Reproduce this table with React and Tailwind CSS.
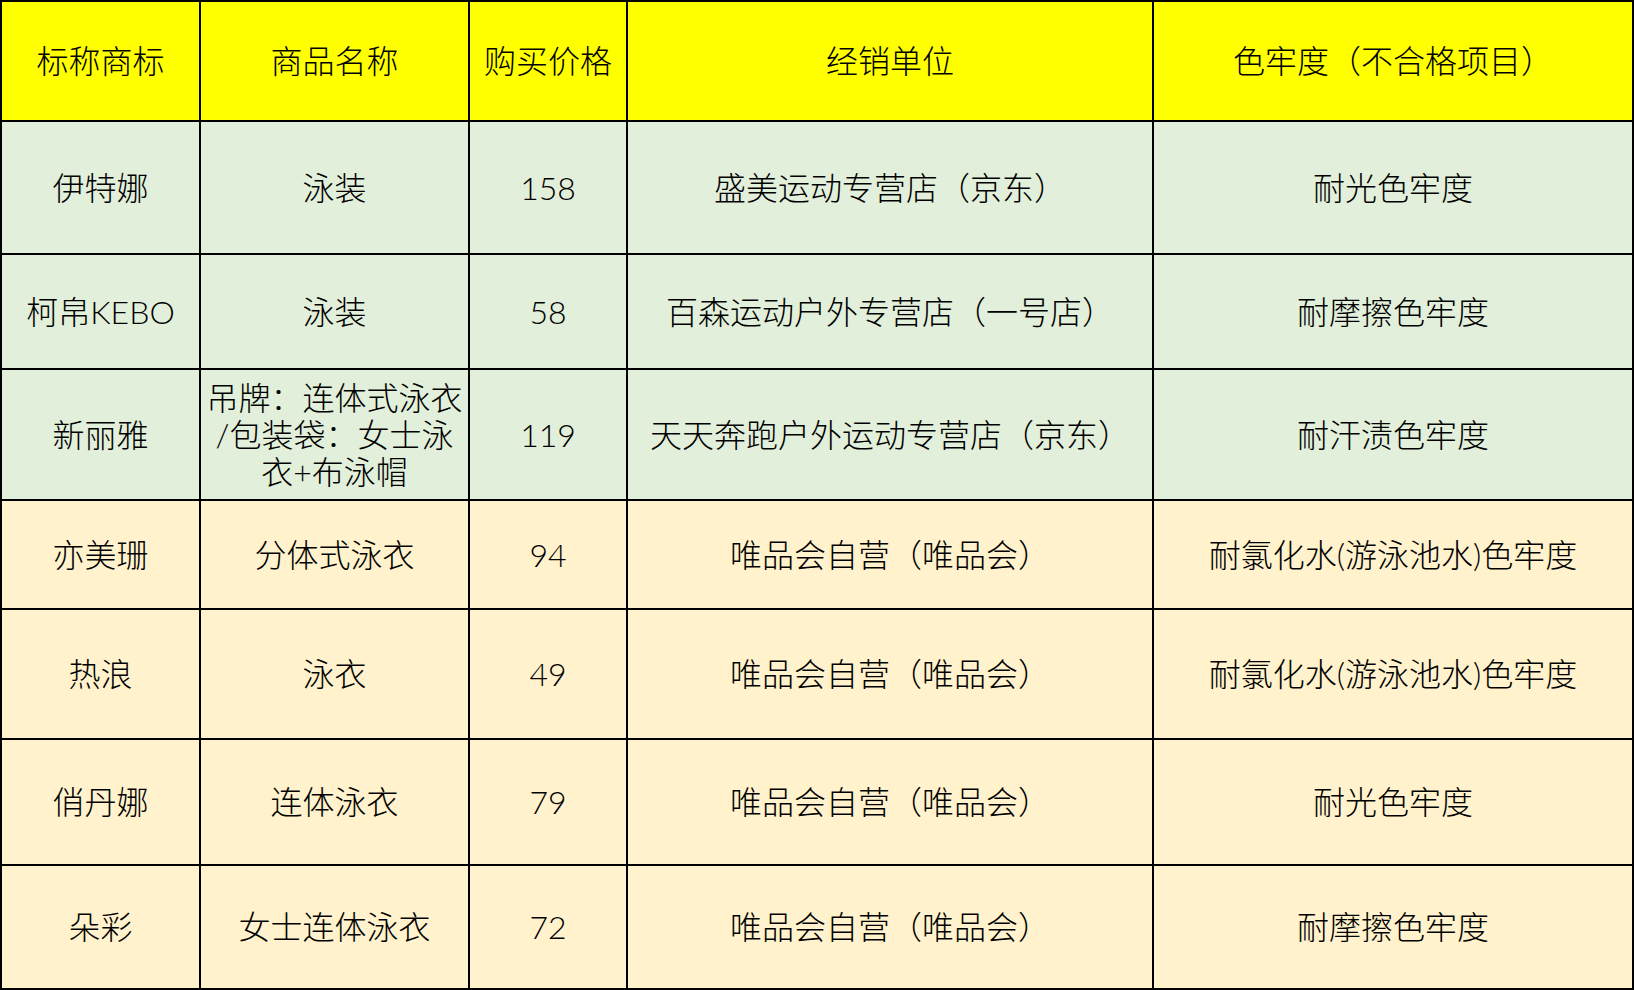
import React from "react";

const header = ["标称商标", "商品名称", "购买价格", "经销单位", "色牢度（不合格项目）"];

const rows = [
  { bg: "bg-[#e2efda]", cells: ["伊特娜", "泳装", "158", "盛美运动专营店（京东）", "耐光色牢度"] },
  { bg: "bg-[#e2efda]", cells: ["柯帛KEBO", "泳装", "58", "百森运动户外专营店（一号店）", "耐摩擦色牢度"] },
  {
    bg: "bg-[#e2efda]",
    cells: [
      "新丽雅",
      <span className="block leading-[37px]">
        吊牌：连体式泳衣
        <br />
        /包装袋：女士泳
        <br />
        衣+布泳帽
      </span>,
      "119",
      "天天奔跑户外运动专营店（京东）",
      "耐汗渍色牢度",
    ],
  },
  { bg: "bg-[#fff2cc]", cells: ["亦美珊", "分体式泳衣", "94", "唯品会自营（唯品会）", "耐氯化水(游泳池水)色牢度"] },
  { bg: "bg-[#fff2cc]", cells: ["热浪", "泳衣", "49", "唯品会自营（唯品会）", "耐氯化水(游泳池水)色牢度"] },
  { bg: "bg-[#fff2cc]", cells: ["俏丹娜", "连体泳衣", "79", "唯品会自营（唯品会）", "耐光色牢度"] },
  { bg: "bg-[#fff2cc]", cells: ["朵彩", "女士连体泳衣", "72", "唯品会自营（唯品会）", "耐摩擦色牢度"] },
];

export default function App() {
  return (
    <div
      className="w-[1634px] h-[990px] bg-black p-[2px] grid grid-cols-[197px_267px_156px_524px_478px] grid-rows-[118px_131px_113px_129px_107px_128px_124px_122px] gap-[2px] text-black text-[32px] font-light leading-[1.17]"
      style={{ fontFamily: "'Century Gothic', Lato, 'Noto Sans CJK SC', sans-serif" }}
    >
      {header.map((h, i) => (
        <div key={"h" + i} className="bg-[#ffff00] flex items-center justify-center text-center px-[2px] whitespace-nowrap">
          <span>{h}</span>
        </div>
      ))}
      {rows.map((r, ri) =>
        r.cells.map((c, ci) => (
          <div
            key={ri + "-" + ci}
            className={`${r.bg} flex items-center justify-center text-center px-[2px] whitespace-nowrap`}
          >
            <span>{c}</span>
          </div>
        ))
      )}
    </div>
  );
}
